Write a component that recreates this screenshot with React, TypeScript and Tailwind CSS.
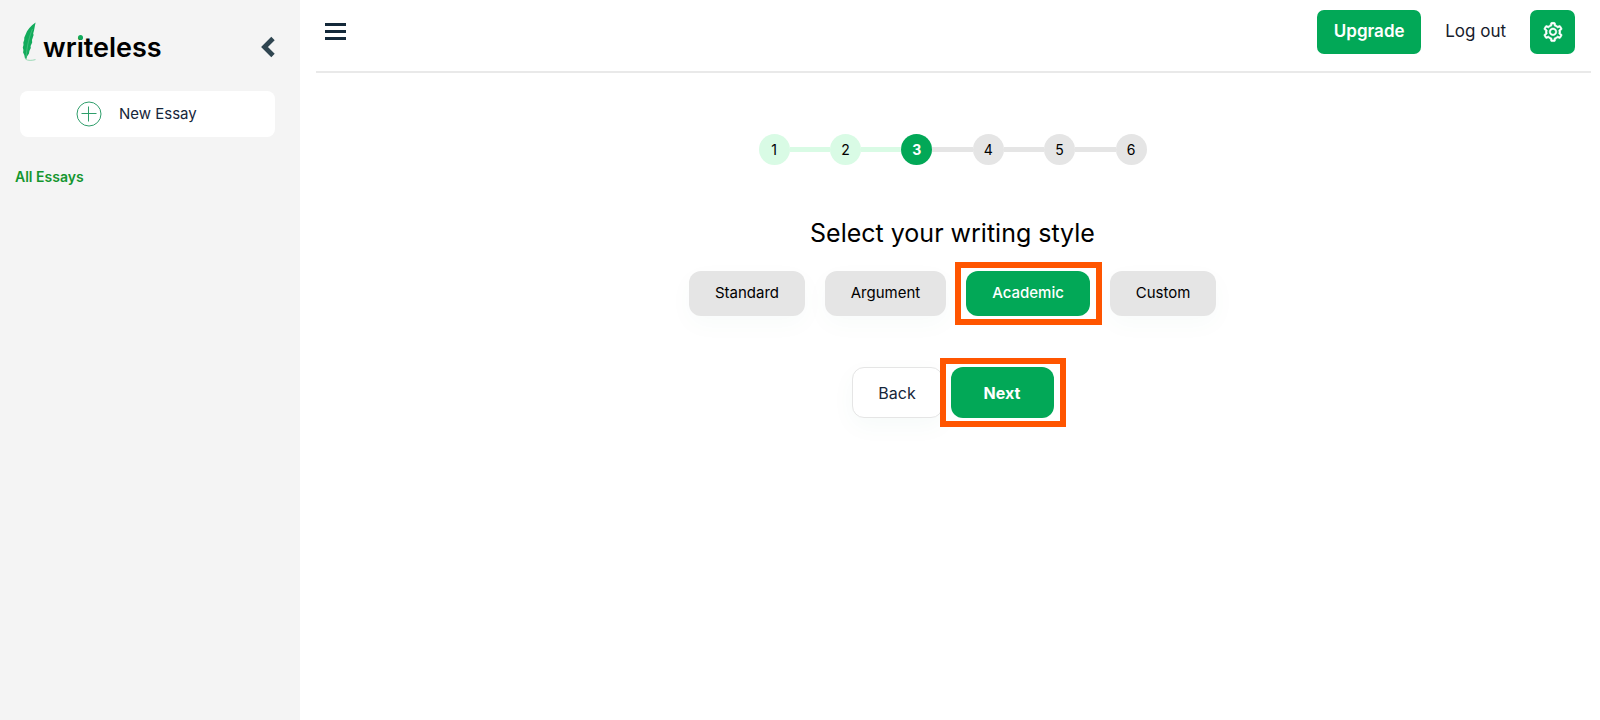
import { AiOutlineSetting } from 'react-icons/ai';

type StepState = 'done' | 'current' | 'upcoming';

const STEPS = [1, 2, 3, 4, 5, 6];
const CURRENT_STEP = 3;

/** Writing styles offered in this step. */
const STYLES = [
  { label: 'Standard', width: 'w-[116px]' },
  { label: 'Argument', width: 'w-[121px]' },
  { label: 'Academic', width: 'w-[124px]' },
  { label: 'Custom', width: 'w-[106px]' },
];
const SELECTED_STYLE = 'Academic';

const circleClass: Record<StepState, string> = {
  done: 'bg-[#d9fbe5] text-black',
  current: 'bg-[#02a857] font-bold text-white',
  upcoming: 'bg-[#e5e5e5] text-black',
};

function stepState(step: number): StepState {
  if (step < CURRENT_STEP) return 'done';
  return step === CURRENT_STEP ? 'current' : 'upcoming';
}

function Logo() {
  return (
    <a href="#" aria-label="writeless" className="flex items-start">
      <svg viewBox="0 0 16 40" className="h-10 w-4" aria-hidden="true">
        <path
          d="M13.6 0.5C9 3.6 5 8 3.4 13L2.3 15.5L2.2 18L1.3 20.5L1.5 23L0.8 25.5L1.4 28L1.1 30.5L2.3 33L3 36.5L4.6 36.8L5 34.5L7 31.5L7.4 29L8.8 26L8.6 24L10.2 20.5L10 18L11.6 13L11.2 11.5C12.6 7.5 12.6 4 13.6 0.5Z"
          fill="#12ab5b"
        />
        <path d="M10.5 7C7.5 14 5 23 4 36" fill="none" stroke="#5cc68d" strokeWidth="0.6" />
        <path d="M3.5 37.2C6 38.8 10 38.6 13.5 37.6" fill="none" stroke="#9bd9b6" strokeWidth="1" />
      </svg>
      <span className="mt-2.5 ml-[5px] text-[27px] leading-8 font-semibold text-black">
        wr
        <span className="relative">
          i
          <span className="absolute top-1 left-px size-[5px] rounded-full bg-[#12ab5b]" />
        </span>
        teless
      </span>
    </a>
  );
}

function Sidebar() {
  return (
    <aside className="w-[300px] shrink-0 bg-[#f4f4f4]">
      <div className="flex items-start justify-between pt-[22px] pr-[25px] pl-[22px]">
        <Logo />
        <button type="button" aria-label="Collapse sidebar" className="mt-3.5">
          <svg viewBox="0 0 14 22" className="h-[22px] w-3.5" aria-hidden="true">
            <path d="M12 2.5L3.5 11L12 19.5" fill="none" stroke="#2f4550" strokeWidth="4.8" />
          </svg>
        </button>
      </div>

      <div className="mt-[27px] pr-[25px] pl-5">
        <button
          type="button"
          className="flex h-[46px] w-full items-center rounded-lg bg-white pl-14 text-[15px] text-[#16263a]"
        >
          <svg viewBox="0 0 26 26" className="mr-[17px] size-[26px]" aria-hidden="true">
            <g fill="none" stroke="#2f9e6b" strokeWidth="1">
              <circle cx="13" cy="13" r="12" />
              <path d="M5.5 12.5H20.5M12.5 5.5V20.5" />
            </g>
          </svg>
          New Essay
        </button>
      </div>

      <a href="#" className="mt-7 ml-[15px] inline-block text-sm leading-6 font-semibold text-[#14962f]">
        All Essays
      </a>
    </aside>
  );
}

function Header() {
  return (
    <header className="flex items-start justify-between border-b-2 border-[#e9e9e9] pt-2.5 pr-4 pb-[17px] pl-[9px]">
      <button type="button" aria-label="Toggle menu" className="mt-[13px] flex flex-col gap-1">
        <span className="h-[3px] w-[21px] bg-[#14293a]" />
        <span className="h-[3px] w-[21px] bg-[#14293a]" />
        <span className="h-[3px] w-[21px] bg-[#14293a]" />
      </button>
      <div className="flex items-center">
        <button
          type="button"
          className="h-11 w-[104px] rounded-[7px] bg-[#02a857] text-[17px] font-semibold text-white"
        >
          Upgrade
        </button>
        <a href="#" className="ml-6 text-[17px] text-[#16202c]">
          Log out
        </a>
        <button
          type="button"
          aria-label="Settings"
          className="ml-6 flex h-11 w-[45px] items-center justify-center rounded-[7px] bg-[#02a857] text-white"
        >
          <AiOutlineSetting className="size-[22px]" strokeWidth={28} />
        </button>
      </div>
    </header>
  );
}

function Stepper() {
  return (
    <ol className="flex w-[388px] items-center">
      {STEPS.map((step) => (
        <li key={step} className={step > 1 ? 'flex flex-1 items-center' : 'flex items-center'}>
          {step > 1 && (
            <span className={`h-[5px] flex-1 ${step <= CURRENT_STEP ? 'bg-[#d9fbe5]' : 'bg-[#e5e5e5]'}`} />
          )}
          <span
            className={`flex size-[31px] items-center justify-center rounded-full text-sm ${circleClass[stepState(step)]}`}
          >
            {step}
          </span>
        </li>
      ))}
    </ol>
  );
}

/** Orange outline drawn around a highlighted button. */
function Highlight() {
  return (
    <span className="pointer-events-none absolute -top-[9px] -right-3 -bottom-[9px] -left-[11px] border-6 border-[#ff5500]" />
  );
}

export default function App() {
  return (
    <div className="flex min-h-screen bg-white font-['Inter',sans-serif]">
      <Sidebar />
      <div className="min-w-0 flex-1 pr-[9px] pl-4">
        <Header />
        <main className="flex flex-col items-center pt-[61px] pr-0.5">
          <Stepper />
          <h1 className="mt-[50px] text-[25px] leading-9 text-black">Select your writing style</h1>

          <div className="mt-5 flex gap-5">
            {STYLES.map(({ label, width }) => {
              const selected = label === SELECTED_STYLE;
              return (
                <div key={label} className="relative">
                  <button
                    type="button"
                    aria-pressed={selected}
                    className={`h-[45px] rounded-xl text-[15px] ${width} ${
                      selected
                        ? 'bg-[#02a857] font-medium text-white'
                        : 'bg-[#e5e5e5] text-black shadow-[0_8px_24px_rgba(0,140,110,0.03)]'
                    }`}
                  >
                    {label}
                  </button>
                  {selected && <Highlight />}
                </div>
              );
            })}
          </div>

          <div className="mt-[51px] flex gap-2">
            <button
              type="button"
              className="h-[51px] w-[91px] rounded-xl border border-[#e5e5e5] bg-white text-base text-[#16263a] shadow-[0_8px_24px_rgba(0,140,110,0.04)]"
            >
              Back
            </button>
            <div className="relative">
              <button
                type="button"
                className="h-[51px] w-[103px] rounded-xl bg-[#02a857] text-base font-bold text-white"
              >
                Next
              </button>
              <Highlight />
            </div>
          </div>
        </main>
      </div>
    </div>
  );
}
